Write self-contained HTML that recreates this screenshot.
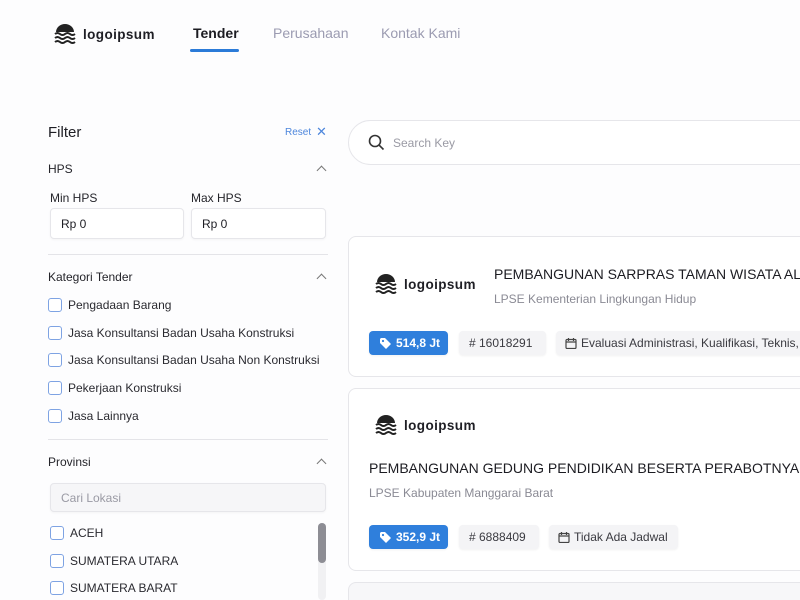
<!DOCTYPE html>
<html style="overflow:hidden;width:800px;height:600px"><head><meta charset="utf-8"><style>
*{box-sizing:border-box;margin:0;padding:0}
body{width:800px;height:600px;overflow:hidden;background:#fdfdfe;font-family:"Liberation Sans",sans-serif;color:#1e1e24;position:relative}
.a{position:absolute;white-space:nowrap}
svg{flex-shrink:0}
.logo{display:flex;align-items:center;gap:6px;font-weight:bold;font-size:13.5px;letter-spacing:0.4px;color:#1f1f25}
.nav{font-size:14px;color:#9b9bb1}
.h{font-size:12px;color:#25252b}
.chev{width:7px;height:7px;border-left:1.3px solid #777;border-top:1.3px solid #777;transform:rotate(45deg)}
.inp{border:1px solid #e6e6ea;border-radius:4px;background:#fff;font-size:12px;padding-left:10px;display:flex;align-items:center;box-shadow:0 1px 2px rgba(0,0,0,.04)}
.hr{height:1px;background:#e4e4e8}
.cb{width:14px;height:14px;border:1.4px solid #7ea3e3;border-radius:3px;background:#fff}
.lbl{font-size:12px;color:#2a2a30}
.card{border:1px solid #e6e6ea;border-radius:8px;background:#fff}
.chip{height:24px;border-radius:4px;background:#f4f4f6;font-size:12px;color:#3a3a40;display:flex;align-items:center;padding:0 10px;gap:4px;box-shadow:0 1px 2px rgba(0,0,0,.06);overflow:hidden}
.blue{background:#2f7fdc;color:#fff;font-weight:bold}
.title{font-size:14px;color:#1c1c22}
.sub{font-size:12px;color:#8a8a94}
</style></head><body>
<svg width="0" height="0" style="position:absolute"><defs><g id="lg"><path d="M2 9a9 8 0 0 1 18 0z" fill="#222"/><path d="M1 11q2.5-2 5 0t5 0t5 0t5 0M1 15q2.5-2 5 0t5 0t5 0t5 0M1 19q2.5-2 5 0t5 0t5 0t5 0" stroke="#222" stroke-width="2" fill="none"/></g>
<g id="tag"><path d="M1 2v4l6 6 5-5-6-6H2z" fill="#fff"/><circle cx="4" cy="4" r="1.1" fill="#2f7fdc"/></g>
<g id="cal"><rect x="1" y="2.5" width="10" height="9" rx="1" stroke="#444" stroke-width="1.2" fill="none"/><path d="M1 5h10M3.5 1v3M8.5 1v3" stroke="#444" stroke-width="1.2"/></g></defs></svg>

<div class="a logo" style="left:54px;top:23px"><svg width="23" height="22"><use href="#lg"/></svg>logoipsum</div>
<div class="a nav" style="left:193px;top:25px;color:#1c1c22;font-weight:bold">Tender</div>
<div class="a" style="left:190px;top:49px;width:49px;height:3px;border-radius:2px;background:#2b7bd8"></div>
<div class="a nav" style="left:273px;top:25px">Perusahaan</div>
<div class="a nav" style="left:381px;top:25px">Kontak Kami</div>

<div class="a" style="left:48px;top:124px;font-size:15px">Filter</div>
<div class="a" style="left:285px;top:127px;font-size:10px;color:#4d86dc">Reset</div>
<div class="a" style="left:316px;top:124px;font-size:13px;color:#4d86dc">✕</div>
<div class="a h" style="left:48px;top:162px">HPS</div>
<div class="a chev" style="left:318px;top:167px"></div>
<div class="a h" style="left:50px;top:191px">Min HPS</div>
<div class="a h" style="left:191px;top:191px">Max HPS</div>
<div class="a inp" style="left:50px;top:208px;width:134px;height:31px">Rp 0</div>
<div class="a inp" style="left:191px;top:208px;width:135px;height:31px">Rp 0</div>
<div class="a hr" style="left:48px;top:254px;width:280px"></div>

<div class="a h" style="left:48px;top:270px">Kategori Tender</div>
<div class="a chev" style="left:318px;top:275px"></div>
<div class="a cb" style="left:48px;top:298px"></div><div class="a lbl" style="left:68px;top:298px">Pengadaan Barang</div>
<div class="a cb" style="left:48px;top:326px"></div><div class="a lbl" style="left:68px;top:326px">Jasa Konsultansi Badan Usaha Konstruksi</div>
<div class="a cb" style="left:48px;top:353px"></div><div class="a lbl" style="left:68px;top:353px">Jasa Konsultansi Badan Usaha Non Konstruksi</div>
<div class="a cb" style="left:48px;top:381px"></div><div class="a lbl" style="left:68px;top:381px">Pekerjaan Konstruksi</div>
<div class="a cb" style="left:48px;top:409px"></div><div class="a lbl" style="left:68px;top:409px">Jasa Lainnya</div>
<div class="a hr" style="left:48px;top:439px;width:280px"></div>

<div class="a h" style="left:48px;top:455px">Provinsi</div>
<div class="a chev" style="left:318px;top:460px"></div>
<div class="a inp" style="left:50px;top:483px;width:276px;height:29px;background:#f6f6f8;color:#9a9aa4">Cari Lokasi</div>
<div class="a cb" style="left:50px;top:526px"></div><div class="a lbl" style="left:70px;top:526px">ACEH</div>
<div class="a cb" style="left:50px;top:554px"></div><div class="a lbl" style="left:70px;top:554px">SUMATERA UTARA</div>
<div class="a cb" style="left:50px;top:581px"></div><div class="a lbl" style="left:70px;top:581px">SUMATERA BARAT</div>
<div class="a" style="left:318px;top:523px;width:8px;height:77px;background:#f1f1f3;border-radius:4px"></div>
<div class="a" style="left:318px;top:523px;width:8px;height:40px;background:#8d8d94;border-radius:4px"></div>

<div class="a" style="left:348px;top:120px;width:480px;height:45px;border:1px solid #e6e6ea;border-radius:23px;background:#fff"></div>
<svg class="a" style="left:368px;top:134px" width="17" height="17"><circle cx="7" cy="7" r="5.5" stroke="#333" stroke-width="1.6" fill="none"/><path d="M11 11l4.5 4.5" stroke="#333" stroke-width="1.6"/></svg>
<div class="a" style="left:393px;top:136px;font-size:12px;color:#9a9aa4">Search Key</div>

<div class="a card" style="left:348px;top:236px;width:470px;height:141px"></div>
<div class="a logo" style="left:375px;top:273px"><svg width="23" height="22"><use href="#lg"/></svg>logoipsum</div>
<div class="a title" style="left:494px;top:266px">PEMBANGUNAN SARPRAS TAMAN WISATA ALAM</div>
<div class="a sub" style="left:494px;top:292px">LPSE Kementerian Lingkungan Hidup</div>
<div class="a chip blue" style="left:369px;top:331px;width:79px"><svg width="13" height="13"><use href="#tag"/></svg>514,8 Jt</div>
<div class="a chip" style="left:459px;top:331px;width:87px"># 16018291</div>
<div class="a chip" style="left:556px;top:331px;width:260px;padding-left:9px"><svg width="12" height="12"><use href="#cal"/></svg>Evaluasi Administrasi, Kualifikasi, Teknis, dan</div>

<div class="a card" style="left:348px;top:388px;width:470px;height:183px"></div>
<div class="a logo" style="left:375px;top:414px"><svg width="23" height="22"><use href="#lg"/></svg>logoipsum</div>
<div class="a title" style="left:369px;top:460px">PEMBANGUNAN GEDUNG PENDIDIKAN BESERTA PERABOTNYA SD</div>
<div class="a sub" style="left:369px;top:486px">LPSE Kabupaten Manggarai Barat</div>
<div class="a chip blue" style="left:369px;top:525px;width:79px"><svg width="13" height="13"><use href="#tag"/></svg>352,9 Jt</div>
<div class="a chip" style="left:459px;top:525px;width:80px"># 6888409</div>
<div class="a chip" style="left:549px;top:525px;width:129px;padding-left:9px"><svg width="12" height="12"><use href="#cal"/></svg>Tidak Ada Jadwal</div>

<div class="a card" style="left:348px;top:582px;width:470px;height:18px;border-bottom:none;border-radius:8px 8px 0 0;background:#f7f7f9"></div>
</body></html>
